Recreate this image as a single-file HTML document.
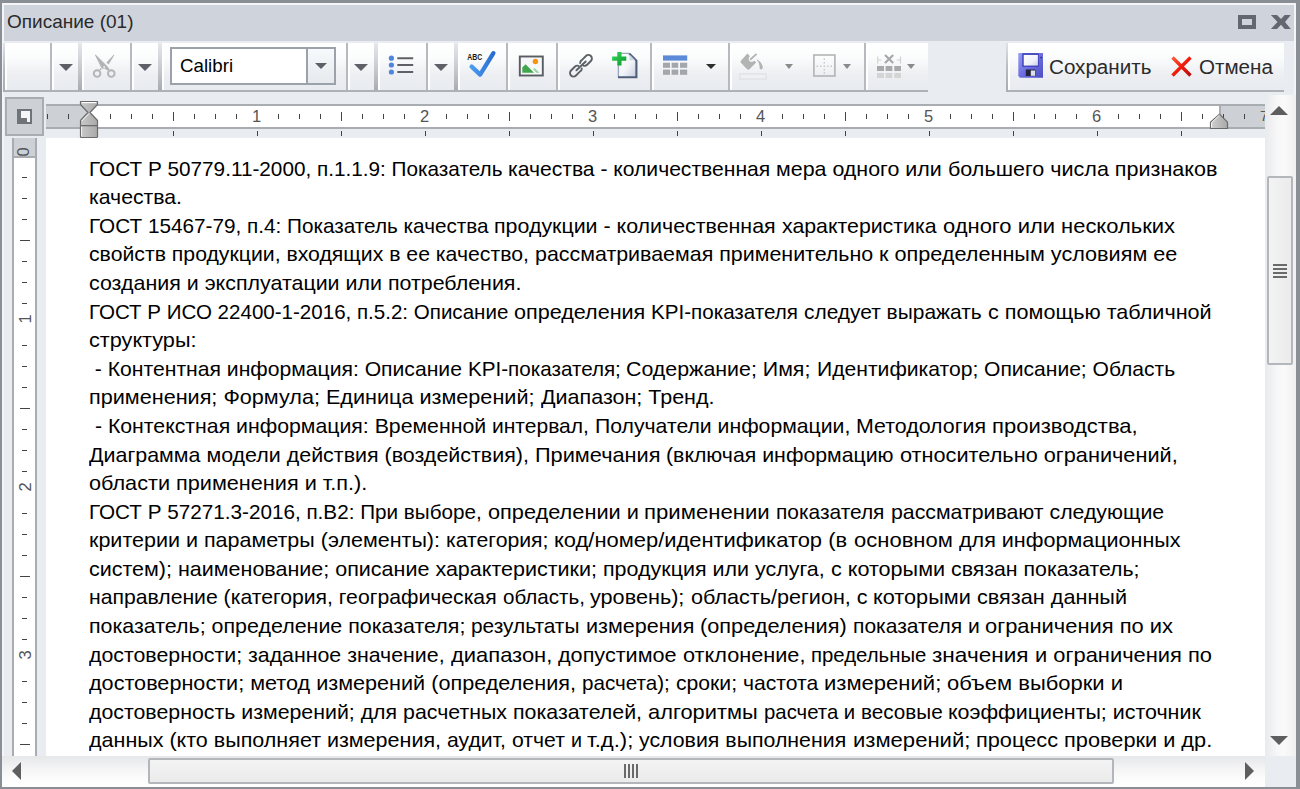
<!DOCTYPE html>
<html><head><meta charset="utf-8">
<style>
*{box-sizing:border-box}
html,body{margin:0;padding:0}
body{width:1300px;height:789px;overflow:hidden;position:relative;background:#8a8e95;font-family:"Liberation Sans",sans-serif}
.a{position:absolute}
.btn{position:absolute;top:43px;height:47px;background:linear-gradient(#ffffff 0%,#fbfcfc 30%,#eceef2 70%,#e8ebef 100%);border-left:2px solid #fff}
.sep{position:absolute;top:43px;height:47px;width:2px;background:#b6babf}
.sepk{position:absolute;top:43px;height:47px;width:4px;background:linear-gradient(#e4e7eb,#c9cdd2 50%,#a9adb2)}
.tri{position:absolute;width:0;height:0;border-left:6px solid transparent;border-right:6px solid transparent;border-top:6px solid #5d6167}
.tk{position:absolute;width:1px;background:#444}
.rn{position:absolute;top:107px;font-size:16.5px;line-height:19px;color:#555;width:20px;text-align:center;margin-left:-11px}
.vtk{position:absolute;height:1px;background:#444}
.doc div{position:relative;height:28.58px}.doc span{position:absolute;top:0;white-space:pre;transform-origin:0 0}
</style></head><body>
<!-- window highlight -->
<div class="a" style="left:2px;top:3px;width:1294px;height:784px;background:#f3f5f8"></div>
<!-- main bg -->
<div class="a" style="left:4px;top:5px;width:1290px;height:782px;background:#e9ecf0"></div>
<!-- title bar -->
<div class="a" style="left:4px;top:5px;width:1290px;height:36px;background:#cfd4dc"></div>
<div class="a" style="left:7px;top:10px;font-size:19px;color:#2a2a2a;line-height:24px">Описание (01)</div>
<!-- maximize -->
<div class="a" style="left:1238px;top:15px;width:18px;height:14px;border:4px solid #636870"></div>
<!-- close -->
<svg class="a" style="left:1270px;top:15px" width="22" height="15" viewBox="0 0 22 15"><path d="M0.9 0.1 H7 L11 4 L14.7 0.1 H20.8 L15 7 L20.8 13.9 H14.7 L11 9.8 L7 13.9 H0.9 L7.5 7 Z" fill="#626770"/></svg>

<!-- toolbar group -->
<div class="a" style="left:3px;top:43px;width:925px;height:49px;border-bottom:2px solid #aeb2b7"></div><div class="a" style="left:3px;top:43px;width:2px;height:49px;background:linear-gradient(#dfe2e6,#b9bdc2 50%,#a9adb2)"></div>
<div class="btn" style="left:5px;width:45px"></div>
<div class="sep" style="left:50px"></div>
<div class="btn" style="left:52px;width:26px"></div>
<div class="tri" style="left:59px;top:64px;border-left-width:7px;border-right-width:7px;border-top-width:7px"></div>
<div class="sepk" style="left:78px"></div>
<div class="btn" style="left:82px;width:48px"></div>
<!-- scissors -->
<svg class="a" style="left:85px;top:48px" width="40" height="34" viewBox="0 0 40 34">
 <g fill="#b4b4b4">
  <path d="M9.8 6.8 L10.8 6.8 L21.6 17.6 L24.6 21.2 L23 22.8 L19.6 20.4 L16.8 20.8 Z"/>
  <path d="M28.9 6.6 L29.3 7.2 L23.6 16.4 L21.4 14.6 Z"/>
  <path d="M14.2 21.2 L15.6 20.2 L16.6 21.6 L15.2 22.6 Z"/>
 </g>
 <rect x="18.4" y="18.2" width="1.6" height="1.6" fill="#f2f3f5"/>
 <g fill="none" stroke="#b4b4b4" stroke-width="1.9"><circle cx="12.1" cy="25.6" r="3.3"/><circle cx="26.3" cy="25.6" r="3.3"/></g>
</svg>
<div class="sep" style="left:130px"></div>
<div class="btn" style="left:132px;width:26px"></div>
<div class="tri" style="left:138px;top:64px;border-left-width:7px;border-right-width:7px;border-top-width:7px"></div>
<div class="sepk" style="left:158px"></div>
<div class="btn" style="left:162px;width:184px"></div>
<!-- font combo -->
<div class="a" style="left:170px;top:47px;width:166px;height:38px;border:2px solid #9ba2aa;background:#fff"></div>
<div class="a" style="left:306px;top:49px;width:2px;height:34px;background:#9ba2aa"></div>
<div class="a" style="left:308px;top:49px;width:26px;height:34px;background:linear-gradient(#f7fafc,#e6e9ed)"></div>
<div class="tri" style="left:315px;top:63px"></div>
<div class="a" style="left:180px;top:53.5px;font-size:19px;line-height:24px;color:#000;transform:scaleX(0.985);transform-origin:0 0">Calibri</div>
<div class="sep" style="left:346px"></div>
<div class="btn" style="left:348px;width:26px"></div>
<div class="tri" style="left:354px;top:64px;border-left-width:7px;border-right-width:7px;border-top-width:7px"></div>
<div class="sepk" style="left:374px"></div>
<div class="btn" style="left:378px;width:48px"></div>
<!-- list icon -->
<svg class="a" style="left:386px;top:54px" width="30" height="22" viewBox="0 0 30 22">
 <g fill="#4d86dc"><circle cx="5.4" cy="4.2" r="2.6"/><circle cx="5.4" cy="11" r="2.6"/><circle cx="5.4" cy="18" r="2.6"/></g>
 <g stroke="#5d6167" stroke-width="2"><path d="M11.3 4.2H27.2M11.3 11H27.2M11.3 18H27.2"/></g>
</svg>
<div class="sep" style="left:426px"></div>
<div class="btn" style="left:428px;width:26px"></div>
<div class="tri" style="left:434px;top:64px;border-left-width:7px;border-right-width:7px;border-top-width:7px"></div>
<div class="sepk" style="left:454px"></div>
<div class="btn" style="left:458px;width:48px"></div>
<!-- spell icon -->
<svg class="a" style="left:462px;top:48px" width="36" height="34" viewBox="0 0 36 34">
 <defs><linearGradient id="cg" x1="0" y1="0" x2="1" y2="0"><stop offset="0" stop-color="#4a9cf0"/><stop offset="1" stop-color="#2a6cd0"/></linearGradient></defs>
 <text x="5.2" y="11.9" font-family="Liberation Sans" font-weight="bold" font-size="9.4" fill="#1a1a1a" textLength="15" lengthAdjust="spacingAndGlyphs">ABC</text>
 <path d="M9.6 18.6 L18.1 26.6 L31.4 5.2" stroke="url(#cg)" stroke-width="4.3" fill="none" stroke-linecap="round" stroke-linejoin="round"/>
</svg>
<div class="sep" style="left:506px"></div>
<div class="btn" style="left:508px;width:48px"></div>
<!-- image icon -->
<svg class="a" style="left:518px;top:54px" width="28" height="24" viewBox="0 0 28 24">
 <rect x="1.8" y="2.5" width="23" height="19" fill="#f6f7f9" stroke="#585d63" stroke-width="1.9"/>
 <circle cx="17.4" cy="7.5" r="2.7" fill="#f7930e"/>
 <path d="M4.3 18.7 L4.3 13.6 L7.6 10.2 L16 18.7 Z" fill="#3fa64a"/>
 <path d="M15.2 15.3 L16.5 14 L21.4 18.7 L18.3 18.7 Z" fill="#97d09e"/>
</svg>
<div class="sep" style="left:556px"></div>
<div class="btn" style="left:558px;width:92px"></div>
<!-- link icon -->
<svg class="a" style="left:564px;top:50px" width="36" height="32" viewBox="0 0 36 32">
 <g fill="none" stroke="#5b6066" stroke-width="1.9" stroke-linecap="round">
  <path transform="translate(22.5 10.4) rotate(45)" d="M-2.68 6.35 A3.5 3.5 0 0 1 -3.5 2.7 V-2.7 A3.5 3.5 0 0 1 3.5 -2.7 V2.7 A3.5 3.5 0 0 1 1.48 5.87"/>
  <path transform="translate(11.4 21.1) rotate(225)" d="M-2.68 6.35 A3.5 3.5 0 0 1 -3.5 2.7 V-2.7 A3.5 3.5 0 0 1 3.5 -2.7 V2.7 A3.5 3.5 0 0 1 1.48 5.87"/>
  <path d="M12.4 20.3 L21.7 11.5"/>
 </g>
</svg>
<!-- new doc icon -->
<svg class="a" style="left:608px;top:48px" width="34" height="34" viewBox="0 0 34 34">
 <defs><linearGradient id="pg" x1="0" y1="0" x2="1" y2="1"><stop offset="0" stop-color="#ffffff"/><stop offset="0.55" stop-color="#f2f4f8"/><stop offset="1" stop-color="#c4cbdb"/></linearGradient>
 <linearGradient id="gg" x1="0" y1="0" x2="1" y2="1"><stop offset="0" stop-color="#36dc60"/><stop offset="1" stop-color="#0c9228"/></linearGradient></defs>
 <path d="M10.5 5.6 H21.3 L28.2 12.5 V29 H10.5 Z" fill="url(#pg)"/>
 <path d="M10.4 29 V5.4 H21.2" fill="none" stroke="#9aa6bd" stroke-width="1.4"/>
 <path d="M21.2 5.4 L28.4 12.6 V29.2 H10" fill="none" stroke="#4f5f7a" stroke-width="2.1"/>
 <path d="M21.5 6.5 V12.2 H27.2 Z" fill="#cdd5e4"/>
 <path d="M11.4 4.1 V17.5 M4.1 10.6 H18.3" stroke="url(#gg)" stroke-width="4.2"/>
</svg>
<div class="sep" style="left:650px"></div>
<div class="btn" style="left:652px;width:76px"></div>
<!-- table icon -->
<svg class="a" style="left:662px;top:54px" width="27" height="22" viewBox="0 0 27 22">
 <rect x="1" y="1.4" width="24.2" height="5.2" fill="#5b8ad8"/>
 <g fill="#a3a6aa"><rect x="1" y="8.7" width="7" height="5.1"/><rect x="9.6" y="8.7" width="6.6" height="5.1"/><rect x="18" y="8.7" width="7.2" height="5.1"/>
 <rect x="1" y="15.6" width="7" height="5.2"/><rect x="9.6" y="15.6" width="6.6" height="5.2"/><rect x="18" y="15.6" width="7.2" height="5.2"/></g>
</svg>
<div class="tri" style="left:706px;top:64px;border-left-width:5px;border-right-width:5px;border-top-width:5px;border-top-color:#2e2e2e"></div>
<div class="sep" style="left:728px"></div>
<div class="btn" style="left:730px;width:134px"></div>
<!-- paint bucket -->
<svg class="a" style="left:736px;top:50px" width="34" height="32" viewBox="0 0 34 32">
 <g fill="#b3b3b3">
 <path d="M11.4 3.6 L13.9 5.9 Q11.6 8.9 13.5 10.9 Q15.5 12.7 18.6 10.8 L20.2 12.4 L13.7 19 Q12.3 20.4 10.9 19 L5.1 13.1 Q3.8 11.8 5.1 10.4 Z"/>
 <path d="M20.3 9.2 Q25.6 11.2 26.8 16.8 Q27 19.5 25 19.5 Q23.2 19.3 23.6 16.8 Q23.5 12.5 20.3 9.2 Z"/>
 </g>
 <path d="M14.1 9.8 L20.6 3.9" stroke="#b3b3b3" stroke-width="1.9"/>
 <rect x="3.8" y="23.9" width="26.2" height="5.1" fill="#eef0f2" stroke="#dfe1e4" stroke-width="1.3"/>
</svg>
<div class="tri" style="left:785px;top:64px;border-left-width:4.5px;border-right-width:4.5px;border-top-width:5px;border-top-color:#8b8b8b"></div>
<!-- borders icon -->
<svg class="a" style="left:812px;top:53px" width="25" height="25" viewBox="0 0 25 25">
 <rect x="1.9" y="2" width="21" height="21" fill="none" stroke="#b3b3b3" stroke-width="1.6"/>
 <g fill="#c2c2c2"><rect x="11.6" y="5.5" width="1.4" height="1.4"/><rect x="11.6" y="9" width="1.4" height="1.4"/><rect x="11.6" y="12.5" width="1.4" height="1.4"/><rect x="11.6" y="16" width="1.4" height="1.4"/><rect x="11.6" y="19.3" width="1.4" height="1.4"/>
 <rect x="4.5" y="12.5" width="1.4" height="1.4"/><rect x="8" y="12.5" width="1.4" height="1.4"/><rect x="15.1" y="12.5" width="1.4" height="1.4"/><rect x="18.6" y="12.5" width="1.4" height="1.4"/></g>
</svg>
<div class="tri" style="left:843px;top:64px;border-left-width:4.5px;border-right-width:4.5px;border-top-width:5px;border-top-color:#8b8b8b"></div>
<div class="sep" style="left:864px"></div>
<div class="btn" style="left:866px;width:62px"></div>
<!-- delete table icon -->
<svg class="a" style="left:875px;top:52px" width="28" height="28" viewBox="0 0 28 28">
 <path d="M10 3 L18.2 11 M18.2 3 L10 11" stroke="#a8a8a8" stroke-width="2.2"/>
 <path d="M2.7 4.5 V11.5 M2.7 8 H6.5 M25.5 4.5 V11.5 M25.5 8 H21.7" stroke="#d2d2d2" stroke-width="1.2"/>
 <g fill="#a9a9a9"><rect x="2" y="14" width="7" height="5"/><rect x="10.6" y="14" width="6.7" height="5"/><rect x="19.3" y="14" width="6.7" height="5"/></g>
 <g fill="#d4d4d4"><rect x="2" y="21" width="7" height="5"/><rect x="10.6" y="21" width="6.7" height="5"/><rect x="19.3" y="21" width="6.7" height="5"/></g>
</svg>
<div class="tri" style="left:907px;top:64px;border-left-width:4.5px;border-right-width:4.5px;border-top-width:5px;border-top-color:#8b8b8b"></div>

<!-- save / cancel group -->
<div class="a" style="left:1006px;top:43px;width:278px;height:49px;border-bottom:2px solid #aeb2b7;background:linear-gradient(#ffffff 0%,#fbfcfc 30%,#eceef2 70%,#e8ebef 100%)"></div><div class="a" style="left:1006px;top:43px;width:2px;height:49px;background:linear-gradient(#dfe2e6,#b9bdc2 50%,#a9adb2)"></div>
<div class="a" style="left:1008px;top:43px;width:2px;height:47px;background:#fff"></div>
<svg class="a" style="left:1014px;top:50px" width="32" height="32" viewBox="0 0 32 32">
 <defs><linearGradient id="fg" x1="0" y1="0" x2="1" y2="1"><stop offset="0" stop-color="#9a9cf4"/><stop offset="0.5" stop-color="#6d6fe0"/><stop offset="1" stop-color="#4a4cc0"/></linearGradient>
 <linearGradient id="fl" x1="0" y1="0" x2="1" y2="1"><stop offset="0" stop-color="#ffffff"/><stop offset="0.6" stop-color="#f0f2fa"/><stop offset="1" stop-color="#c8cfe6"/></linearGradient></defs>
 <path d="M4.3 3 H29 V27.8 H6 L4.3 26 Z" fill="url(#fg)"/>
 <rect x="8.3" y="3.3" width="16.4" height="13.5" fill="#3a3cb8"/>
 <rect x="9.7" y="4.9" width="14.2" height="10.7" fill="url(#fl)"/>
 <rect x="11.8" y="19.5" width="9.5" height="6.5" fill="#24243a"/>
 <rect x="16.8" y="20.5" width="4.2" height="5.3" fill="#dfe2ee"/>
 <rect x="26.4" y="6.8" width="1.4" height="1.6" fill="#2a2a60"/>
</svg>
<div class="a" style="left:1049px;top:55px;font-size:20px;line-height:24px;color:#2b2b2b;transform:scaleX(1.03);transform-origin:0 0">Сохранить</div>
<svg class="a" style="left:1170px;top:55px" width="23" height="23" viewBox="0 0 23 23">
 <defs><linearGradient id="xg" x1="0" y1="0" x2="1" y2="1"><stop offset="0" stop-color="#ff5a3a"/><stop offset="0.5" stop-color="#f01c0c"/><stop offset="1" stop-color="#b80c0c"/></linearGradient></defs>
 <path d="M2.5 2.5 L20.5 20.5 M20.5 2.5 L2.5 20.5" stroke="url(#xg)" stroke-width="3.4"/>
</svg>
<div class="a" style="left:1199px;top:55px;font-size:20px;line-height:24px;color:#2b2b2b;transform:scaleX(1.03);transform-origin:0 0">Отмена</div>

<!-- tab selector -->
<div class="a" style="left:5px;top:97px;width:39px;height:39px;border:2px solid #a9adb2;background:#cdd1d6"></div>
<div class="a" style="left:17px;top:109px;width:15px;height:15px;background:#6f7479"></div>
<div class="a" style="left:21px;top:111px;width:9px;height:11px;background:#f6f6f6"></div>
<div class="a" style="left:21px;top:118px;width:6px;height:4px;background:#6f7479"></div>

<!-- horizontal ruler -->
<div class="a" style="left:46px;top:104px;width:1219px;height:25px;border-top:2px solid #a9adb2;border-bottom:2px solid #a9adb2;background:#fff"></div>
<div class="a" style="left:46px;top:106px;width:43px;height:21px;background:#cdd1d6"></div>
<div class="a" style="left:1219px;top:106px;width:46px;height:21px;background:#cdd1d6"></div>
<div id="rticks"><div class="tk" style="left:47px;top:114px;height:5px"></div>
<div class="tk" style="left:68px;top:114px;height:5px"></div>
<div class="tk" style="left:110px;top:114px;height:5px"></div>
<div class="tk" style="left:131px;top:114px;height:5px"></div>
<div class="tk" style="left:152px;top:114px;height:5px"></div>
<div class="tk" style="left:173px;top:112px;height:9px"></div>
<div class="tk" style="left:194px;top:114px;height:5px"></div>
<div class="tk" style="left:215px;top:114px;height:5px"></div>
<div class="tk" style="left:236px;top:114px;height:5px"></div>
<div class="rn" style="left:257.5px">1</div>
<div class="tk" style="left:278px;top:114px;height:5px"></div>
<div class="tk" style="left:299px;top:114px;height:5px"></div>
<div class="tk" style="left:320px;top:114px;height:5px"></div>
<div class="tk" style="left:341px;top:112px;height:9px"></div>
<div class="tk" style="left:362px;top:114px;height:5px"></div>
<div class="tk" style="left:383px;top:114px;height:5px"></div>
<div class="tk" style="left:404px;top:114px;height:5px"></div>
<div class="rn" style="left:425.5px">2</div>
<div class="tk" style="left:446px;top:114px;height:5px"></div>
<div class="tk" style="left:467px;top:114px;height:5px"></div>
<div class="tk" style="left:488px;top:114px;height:5px"></div>
<div class="tk" style="left:509px;top:112px;height:9px"></div>
<div class="tk" style="left:530px;top:114px;height:5px"></div>
<div class="tk" style="left:551px;top:114px;height:5px"></div>
<div class="tk" style="left:572px;top:114px;height:5px"></div>
<div class="rn" style="left:593.5px">3</div>
<div class="tk" style="left:614px;top:114px;height:5px"></div>
<div class="tk" style="left:635px;top:114px;height:5px"></div>
<div class="tk" style="left:656px;top:114px;height:5px"></div>
<div class="tk" style="left:677px;top:112px;height:9px"></div>
<div class="tk" style="left:698px;top:114px;height:5px"></div>
<div class="tk" style="left:719px;top:114px;height:5px"></div>
<div class="tk" style="left:740px;top:114px;height:5px"></div>
<div class="rn" style="left:761.5px">4</div>
<div class="tk" style="left:782px;top:114px;height:5px"></div>
<div class="tk" style="left:803px;top:114px;height:5px"></div>
<div class="tk" style="left:824px;top:114px;height:5px"></div>
<div class="tk" style="left:845px;top:112px;height:9px"></div>
<div class="tk" style="left:866px;top:114px;height:5px"></div>
<div class="tk" style="left:887px;top:114px;height:5px"></div>
<div class="tk" style="left:908px;top:114px;height:5px"></div>
<div class="rn" style="left:929.5px">5</div>
<div class="tk" style="left:950px;top:114px;height:5px"></div>
<div class="tk" style="left:971px;top:114px;height:5px"></div>
<div class="tk" style="left:992px;top:114px;height:5px"></div>
<div class="tk" style="left:1013px;top:112px;height:9px"></div>
<div class="tk" style="left:1034px;top:114px;height:5px"></div>
<div class="tk" style="left:1055px;top:114px;height:5px"></div>
<div class="tk" style="left:1076px;top:114px;height:5px"></div>
<div class="rn" style="left:1097.5px">6</div>
<div class="tk" style="left:1118px;top:114px;height:5px"></div>
<div class="tk" style="left:1139px;top:114px;height:5px"></div>
<div class="tk" style="left:1160px;top:114px;height:5px"></div>
<div class="tk" style="left:1181px;top:112px;height:9px"></div>
<div class="tk" style="left:1202px;top:114px;height:5px"></div>
<div class="tk" style="left:1223px;top:114px;height:5px"></div>
<div class="tk" style="left:1244px;top:114px;height:5px"></div>
<div class="tk" style="left:173px;top:131px;height:5px"></div>
<div class="tk" style="left:257px;top:131px;height:5px"></div>
<div class="tk" style="left:341px;top:131px;height:5px"></div>
<div class="tk" style="left:425px;top:131px;height:5px"></div>
<div class="tk" style="left:509px;top:131px;height:5px"></div>
<div class="tk" style="left:593px;top:131px;height:5px"></div>
<div class="tk" style="left:677px;top:131px;height:5px"></div>
<div class="tk" style="left:761px;top:131px;height:5px"></div>
<div class="tk" style="left:845px;top:131px;height:5px"></div>
<div class="tk" style="left:929px;top:131px;height:5px"></div>
<div class="tk" style="left:1013px;top:131px;height:5px"></div>
<div class="tk" style="left:1097px;top:131px;height:5px"></div>
<div class="tk" style="left:1181px;top:131px;height:5px"></div>
<svg class="a" style="left:79px;top:100px" width="20" height="39" viewBox="0 0 20 39">
<defs><linearGradient id="ig" x1="0" x2="1"><stop offset="0" stop-color="#c9c9c9"/><stop offset="1" stop-color="#a9a9a9"/></linearGradient></defs>
<path d="M1.5 1.5 H18.5 V4.5 L11 12.5 L18.5 20.5 V25.6 H1.5 V20.5 L9 12.5 L1.5 4.5 Z" fill="url(#ig)" stroke="#6b6b6b" stroke-width="1.2" stroke-linejoin="round"/>
<path d="M1.5 25.6 H18.5 V36.5 Q18.5 37.5 17.5 37.5 H2.5 Q1.5 37.5 1.5 36.5 Z" fill="url(#ig)" stroke="#6b6b6b" stroke-width="1.2"/>
<path d="M2.6 26.6 V36.4" stroke="#f4f4f4" stroke-width="1"/>
<path d="M2.5 2.6 H17.5" stroke="#fff" stroke-width="1.2"/>
<path d="M2.6 21 L10 13.5" stroke="#fff" stroke-width="1"/>
</svg>
<div class="a" style="left:1219px;top:106px;width:2px;height:9px;background:#a9adb2"></div>
<svg class="a" style="left:1209px;top:113px" width="20" height="17" viewBox="0 0 20 17">
<defs><linearGradient id="ig2" x1="0" x2="1"><stop offset="0" stop-color="#d0d0d0"/><stop offset="1" stop-color="#a9a9a9"/></linearGradient></defs>
<path d="M10.5 1.2 L18.5 9.2 V15.5 H1.5 V9.2 Z" fill="url(#ig2)" stroke="#6b6b6b" stroke-width="1.2" stroke-linejoin="round"/>
<path d="M2.6 14.5 V9.7 L10.5 2" stroke="#fff" stroke-width="1" fill="none"/>
</svg></div>

<div class="a" style="left:1250px;top:106px;width:15px;height:21px;overflow:hidden"><div class="a" style="left:10px;top:0.5px;font-size:15px;color:#555;line-height:17px">7</div></div>
<!-- vertical ruler -->
<div class="a" style="left:12px;top:138px;width:25px;height:618px;border-left:2px solid #a9adb2;border-right:2px solid #a9adb2;background:#fff"></div>
<div class="a" style="left:14px;top:138px;width:21px;height:20px;background:#cdd1d6;border-bottom:2px solid #a9adb2"></div>
<div id="vticks"><div class="vtk" style="left:22px;top:177px;width:5px"></div>
<div class="vtk" style="left:22px;top:198px;width:5px"></div>
<div class="vtk" style="left:22px;top:219px;width:5px"></div>
<div class="vtk" style="left:20px;top:240px;width:10px"></div>
<div class="vtk" style="left:22px;top:261px;width:5px"></div>
<div class="vtk" style="left:22px;top:282px;width:5px"></div>
<div class="vtk" style="left:22px;top:303px;width:5px"></div>
<div class="a" style="left:15px;top:308.5px;width:20px;height:20px;font-size:16.5px;line-height:20px;text-align:center;color:#555;transform:rotate(-90deg)">1</div>
<div class="vtk" style="left:22px;top:345px;width:5px"></div>
<div class="vtk" style="left:22px;top:366px;width:5px"></div>
<div class="vtk" style="left:22px;top:387px;width:5px"></div>
<div class="vtk" style="left:20px;top:408px;width:10px"></div>
<div class="vtk" style="left:22px;top:429px;width:5px"></div>
<div class="vtk" style="left:22px;top:450px;width:5px"></div>
<div class="vtk" style="left:22px;top:471px;width:5px"></div>
<div class="a" style="left:15px;top:476.5px;width:20px;height:20px;font-size:16.5px;line-height:20px;text-align:center;color:#555;transform:rotate(-90deg)">2</div>
<div class="vtk" style="left:22px;top:513px;width:5px"></div>
<div class="vtk" style="left:22px;top:534px;width:5px"></div>
<div class="vtk" style="left:22px;top:555px;width:5px"></div>
<div class="vtk" style="left:20px;top:576px;width:10px"></div>
<div class="vtk" style="left:22px;top:597px;width:5px"></div>
<div class="vtk" style="left:22px;top:618px;width:5px"></div>
<div class="vtk" style="left:22px;top:639px;width:5px"></div>
<div class="a" style="left:15px;top:644.5px;width:20px;height:20px;font-size:16.5px;line-height:20px;text-align:center;color:#555;transform:rotate(-90deg)">3</div>
<div class="vtk" style="left:22px;top:681px;width:5px"></div>
<div class="vtk" style="left:22px;top:702px;width:5px"></div>
<div class="vtk" style="left:22px;top:723px;width:5px"></div>
<div class="vtk" style="left:20px;top:744px;width:10px"></div>
<div class="a" style="left:13px;top:141.5px;width:20px;height:20px;font-size:16.5px;line-height:20px;text-align:center;color:#555;transform:rotate(-90deg)">0</div></div>

<!-- document -->
<div class="a" style="left:46px;top:138px;width:1219px;height:618px;background:#fff;overflow:hidden">
<div class="doc a" style="left:43px;top:16.75px;font-size:21px;line-height:28.58px;color:#000">
<div><span style="left:0.0px;transform:scaleX(0.9873)">ГОСТ Р 50779.11-2000, п.1.1.9: Показатель </span><span style="left:419.2px;transform:scaleX(1.0044)">качества - количественная </span><span style="left:687.3px;transform:scaleX(1.0200)">мера одного или </span><span style="left:859.0px;transform:scaleX(1.0260)">большего числа признаков</span></div>
<div><span style="left:0.0px;transform:scaleX(1.0104)">качества.</span></div>
<div><span style="left:0.0px;transform:scaleX(0.9869)">ГОСТ 15467-79, п.4: Показатель качества </span><span style="left:405.4px;transform:scaleX(1.0184)">продукции - количественная </span><span style="left:693.0px;transform:scaleX(1.0144)">характеристика </span><span style="left:853.5px;transform:scaleX(1.0448)">одного или нескольких</span></div>
<div><span style="left:0.0px;transform:scaleX(1.0109)">свойств продукции, входящих в ее качество, </span><span style="left:445.8px;transform:scaleX(1.0197)">рассматриваемая применительно </span><span style="left:790.0px;transform:scaleX(1.0306)">к определенным условиям ее</span></div>
<div><span style="left:0.0px;transform:scaleX(1.0200)">создания и эксплуатации или потребления.</span></div>
<div><span style="left:0.0px;transform:scaleX(0.9783)">ГОСТ Р ИСО 22400-1-2016, п.5.2: Описание </span><span style="left:425.0px;transform:scaleX(1.0273)">определения </span><span style="left:562.3px;transform:scaleX(0.9810)">KPI-показателя </span><span style="left:715.0px;transform:scaleX(0.9962)">следует выражать </span><span style="left:898.5px;transform:scaleX(1.0290)">с помощью табличной</span></div>
<div><span style="left:0.0px;transform:scaleX(1.0315)">структуры:</span></div>
<div><span style="left:0.0px;transform:scaleX(1.0067)"> - Контентная информация: Описание </span><span style="left:378.8px;transform:scaleX(0.9820)">KPI-показателя; </span><span style="left:537.4px;transform:scaleX(1.0177)">Содержание; Имя; </span><span style="left:727.7px;transform:scaleX(1.0062)">Идентификатор; </span><span style="left:895.0px;transform:scaleX(1.0026)">Описание; Область</span></div>
<div><span style="left:0.0px;transform:scaleX(1.0294)">применения; Формула; Единица измерений; </span><span style="left:451.5px;transform:scaleX(1.0237)">Диапазон; Тренд.</span></div>
<div><span style="left:0.0px;transform:scaleX(1.0124)"> - Контекстная информация: Временной </span><span style="left:403.0px;transform:scaleX(1.0020)">интервал, </span><span style="left:505.8px;transform:scaleX(1.0098)">Получатели информации, </span><span style="left:767.0px;transform:scaleX(1.0184)">Методология </span><span style="left:903.0px;transform:scaleX(1.0478)">производства,</span></div>
<div><span style="left:0.0px;transform:scaleX(1.0205)">Диаграмма модели действия (воздействия), </span><span style="left:445.8px;transform:scaleX(1.0348)">Примечания </span><span style="left:577.3px;transform:scaleX(1.0136)">(включая информацию </span><span style="left:810.8px;transform:scaleX(1.0340)">относительно ограничений,</span></div>
<div><span style="left:0.0px;transform:scaleX(1.0315)">области применения и т.п.).</span></div>
<div><span style="left:0.0px;transform:scaleX(0.9847)">ГОСТ Р 57271.3-2016, п.В2: При выборе, </span><span style="left:398.5px;transform:scaleX(1.0351)">определении и </span><span style="left:555.4px;transform:scaleX(1.0545)">применении </span><span style="left:687.3px;transform:scaleX(0.9945)">показателя </span><span style="left:801.5px;transform:scaleX(1.0136)">рассматривают следующие</span></div>
<div><span style="left:0.0px;transform:scaleX(1.0243)">критерии и параметры (элементы): </span><span style="left:357.0px;transform:scaleX(1.0106)">категория; </span><span style="left:465.4px;transform:scaleX(1.0436)">код/номер/идентификатор (в </span><span style="left:764.6px;transform:scaleX(1.0482)">основном </span><span style="left:869.6px;transform:scaleX(1.0258)">для информационных</span></div>
<div><span style="left:0.0px;transform:scaleX(1.0237)">систем); наименование; описание характеристики; </span><span style="left:513.9px;transform:scaleX(1.0216)">продукция или услуга, </span><span style="left:741.5px;transform:scaleX(1.0273)">с которыми </span><span style="left:861.5px;transform:scaleX(1.0139)">связан показатель;</span></div>
<div><span style="left:0.0px;transform:scaleX(1.0087)">направление (категория, географическая </span><span style="left:413.5px;transform:scaleX(0.9806)">область, </span><span style="left:501.2px;transform:scaleX(1.0304)">уровень); </span><span style="left:601.6px;transform:scaleX(1.0280)">область/регион, с </span><span style="left:784.2px;transform:scaleX(1.0330)">которыми </span><span style="left:888.0px;transform:scaleX(1.0310)">связан данный</span></div>
<div><span style="left:0.0px;transform:scaleX(1.0199)">показатель; определение показателя; </span><span style="left:382.3px;transform:scaleX(0.9928)">результаты </span><span style="left:496.5px;transform:scaleX(1.0263)">измерения </span><span style="left:610.8px;transform:scaleX(1.0343)">(определения) </span><span style="left:763.5px;transform:scaleX(1.0008)">показателя и </span><span style="left:896.0px;transform:scaleX(1.0427)">ограничения по их</span></div>
<div><span style="left:0.0px;transform:scaleX(1.0156)">достоверности; заданное значение, </span><span style="left:361.5px;transform:scaleX(1.0445)">диапазон, </span><span style="left:468.9px;transform:scaleX(1.0292)">допустимое </span><span style="left:593.5px;transform:scaleX(1.0330)">отклонение, </span><span style="left:722.0px;transform:scaleX(0.9687)">предельные </span><span style="left:843.0px;transform:scaleX(1.0752)">значения </span><span style="left:945.8px;transform:scaleX(1.0424)">и ограничения по</span></div>
<div><span style="left:0.0px;transform:scaleX(1.0295)">достоверности; метод измерений (определения, </span><span style="left:493.0px;transform:scaleX(0.9813)">расчета); </span><span style="left:586.5px;transform:scaleX(1.0071)">сроки; частота </span><span style="left:734.6px;transform:scaleX(1.0497)">измерений; </span><span style="left:858.0px;transform:scaleX(1.0463)">объем выборки и</span></div>
<div><span style="left:0.0px;transform:scaleX(1.0156)">достоверность измерений; для расчетных </span><span style="left:423.9px;transform:scaleX(1.0174)">показателей, </span><span style="left:558.9px;transform:scaleX(1.0403)">алгоритмы </span><span style="left:674.6px;transform:scaleX(0.9688)">расчета и </span><span style="left:771.5px;transform:scaleX(0.9856)">весовые </span><span style="left:859.0px;transform:scaleX(1.0201)">коэффициенты; источник</span></div>
<div><span style="left:0.0px;transform:scaleX(1.0241)">данных (кто выполняет измерения, </span><span style="left:358.0px;transform:scaleX(1.0077)">аудит, </span><span style="left:422.7px;transform:scaleX(1.0100)">отчет </span><span style="left:481.5px;transform:scaleX(0.9387)">и </span><span style="left:498.0px;transform:scaleX(1.0506)">т.д.); </span><span style="left:550.4px;transform:scaleX(1.0151)">условия выполнения </span><span style="left:763.5px;transform:scaleX(1.0505)">измерений; </span><span style="left:887.0px;transform:scaleX(1.0353)">процесс проверки и др.</span></div>
</div>
</div>

<!-- vertical scrollbar -->
<div class="a" style="left:1265px;top:95px;width:31px;height:661px;background:linear-gradient(90deg,#e9eaec 0%,#f7f7f8 40%,#fafafa 60%,#f0f0f1 100%)"></div>
<div class="tri" style="left:1270px;top:106px;border-left-width:9px;border-right-width:9px;border-top:none;border-bottom:9px solid #5e5e5e"></div>
<div class="a" style="left:1267px;top:176px;width:26px;height:189px;border:2px solid #b3b7bc;border-radius:2px;background:linear-gradient(90deg,#f3f3f4,#ebebec)"></div>
<div class="a" style="left:1273px;top:264px;width:14px;height:2px;background:#6a6a6a;box-shadow:0 4px 0 #6a6a6a,0 8px 0 #6a6a6a,0 12px 0 #6a6a6a"></div>
<div class="tri" style="left:1270px;top:736px;border-left-width:9px;border-right-width:9px;border-top-width:9px;border-top-color:#5e5e5e"></div>

<!-- horizontal scrollbar -->
<div class="a" style="left:2px;top:756px;width:1263px;height:31px;background:linear-gradient(#e6e7e9 0%,#f4f4f5 40%,#fbfbfb 70%,#ffffff 100%)"></div>
<div class="a" style="left:12px;top:762px;width:0;height:0;border-top:9px solid transparent;border-bottom:9px solid transparent;border-right:9px solid #5e5e5e"></div>
<div class="a" style="left:1245px;top:762px;width:0;height:0;border-top:9px solid transparent;border-bottom:9px solid transparent;border-left:9px solid #5e5e5e"></div>
<div class="a" style="left:148px;top:758px;width:966px;height:26px;border:2px solid #b3b7bc;border-radius:2px;background:linear-gradient(#f3f3f4,#ebebec)"></div>
<div class="a" style="left:624px;top:764px;width:2px;height:14px;background:#6a6a6a;box-shadow:4px 0 0 #6a6a6a,8px 0 0 #6a6a6a,12px 0 0 #6a6a6a"></div>
<div class="a" style="left:1265px;top:756px;width:31px;height:31px;background:#e9ecf0"></div>
</body></html>
